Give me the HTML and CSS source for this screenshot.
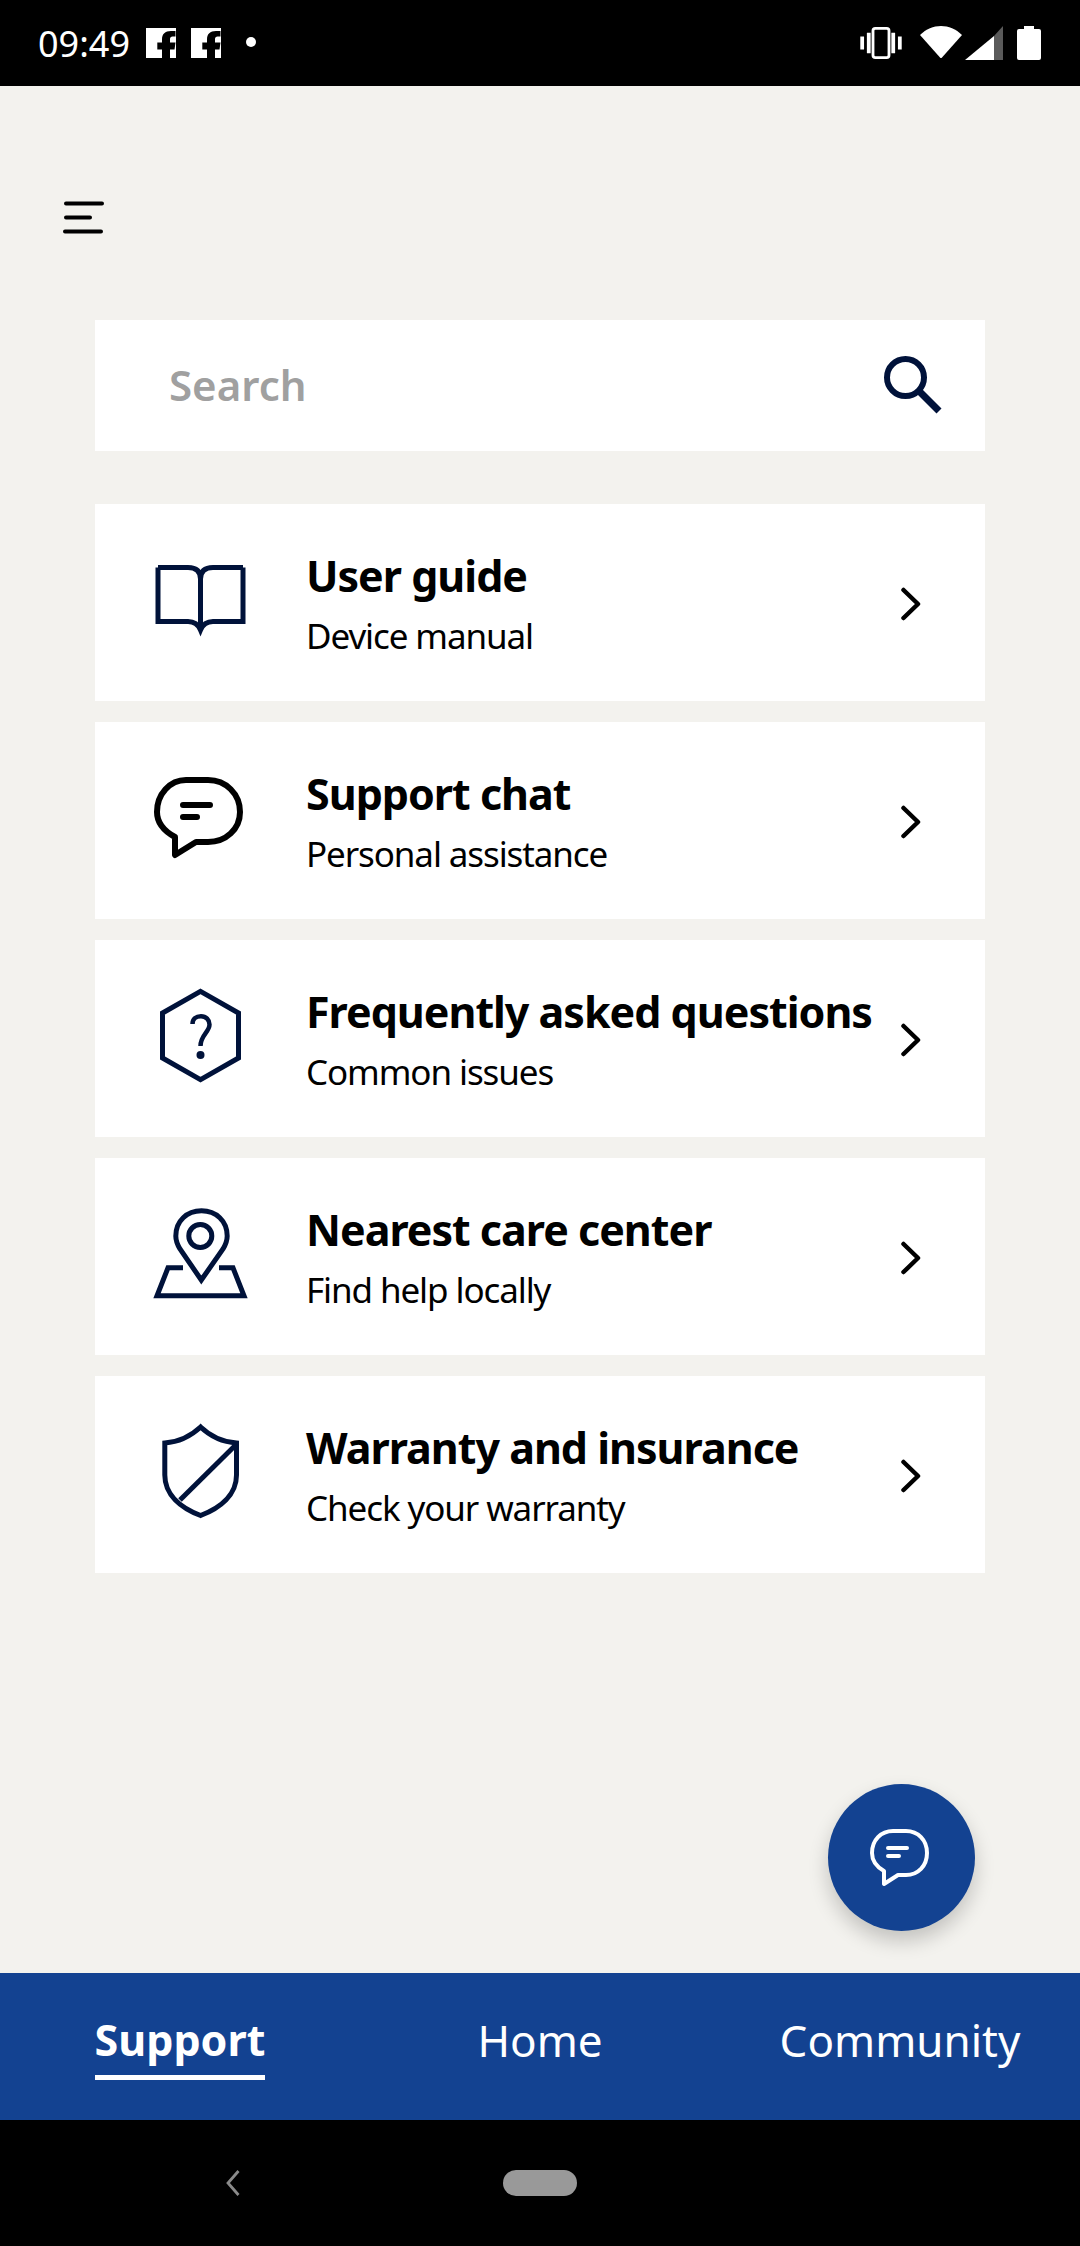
FILE: index.html
```html
<!DOCTYPE html>
<html lang="en">
<head>
    <meta charset="UTF-8">
    <meta name="viewport" content="width=device-width, initial-scale=1.0">
    <title>Support</title>
    <link rel="stylesheet" href="styles.css">
</head>
<body>
    <div class="phone">
        <header class="status-bar">
            <div class="status-left">
                <span class="clock">09:49</span>
                <svg class="fb" viewBox="0 0 30 30"><path fill="#fff" d="M0 0H30V30H24V21.500H28.500L29.500 14.600H24V11C24 9.500 25 8.500 26.500 8.500H29.500V3H25C19 3 16 6 16 11V14.600H11.300V21.500H16V30H0Z"/></svg>
                <svg class="fb" viewBox="0 0 30 30"><path fill="#fff" d="M0 0H30V30H24V21.500H28.500L29.500 14.600H24V11C24 9.500 25 8.500 26.500 8.500H29.500V3H25C19 3 16 6 16 11V14.600H11.300V21.500H16V30H0Z"/></svg>
                <span class="dot"></span>
            </div>
            <div class="status-right">
                <svg class="vibrate" viewBox="0 0 44 34"><path fill="#fff" d="M0 10H4V24H0ZM40 10H44V24H40ZM7 6H11V28H7ZM33 6H37V28H33Z"/><rect x="13.500" y="1.500" width="17" height="31" rx="2.500" fill="none" stroke="#fff" stroke-width="3"/></svg>
                <svg class="wifi" viewBox="0 0 42 32"><path fill="#fff" d="M0 9C12-3 30-3 42 9L22 31.500Q21 32.500 20 31.500Z"/></svg>
                <svg class="signal" viewBox="0 0 38 34"><path fill="#fff" d="M0 34L29 10V34Z"/><path fill="#5a5a5a" d="M29 10L38 0V34H29Z"/></svg>
                <svg class="battery" viewBox="0 0 24 34"><path fill="#fff" d="M7 0H17V3H22Q24 3 24 5V32Q24 34 22 34H2Q0 34 0 32V5Q0 3 2 3H7Z"/></svg>
            </div>
        </header>

        <main class="content">
            <button class="menu-btn">
                <svg viewBox="0 0 42 34" width="42" height="34"><path fill="none" stroke="#000" stroke-width="4" stroke-linecap="round" d="M3 3.500H39M3 17.500H27M2 31.500H38"/></svg>
            </button>

            <div class="search">
                <span class="search-text">Search</span>
                <svg class="search-icon" viewBox="0 0 58 58"><circle cx="21.500" cy="21.500" r="18.500" fill="none" stroke="#00123a" stroke-width="6"/><path fill="none" stroke="#00123a" stroke-width="7" d="M35 35L55 55"/></svg>
            </div>

            <div class="card-list">
                <div class="card">
                    <div class="card-icon">
                        <svg viewBox="0 0 100 116" width="100" height="116"><path fill="none" stroke="#00123a" stroke-width="5" d="M8 22.500H38Q50.500 22.500 50.500 34V82M93 22.500H63Q50.500 22.500 50.500 34M8 22.500V76.500H38Q47 76.500 50.500 85Q54 76.500 63 76.500H93V22.500"/></svg>
                    </div>
                    <div class="card-text">
                        <div class="card-title">User guide</div>
                        <div class="card-sub">Device manual</div>
                    </div>
                    <svg class="chevron" viewBox="0 0 20 34"><path fill="none" stroke="#000" stroke-width="4.500" stroke-linecap="round" stroke-linejoin="round" d="M2.500 3L17 17L2.500 31"/></svg>
                </div>
                <div class="card">
                    <div class="card-icon">
                        <svg viewBox="0 0 100 116" width="100" height="116"><path fill="none" stroke="#000" stroke-width="6" stroke-linejoin="round" d="M36 17H58C76 17 90 31 90 49C90 66 76 79 58 79H46L25 92V74C14 68 7 59 7 49C7 31 20 17 36 17Z"/><path fill="none" stroke="#000" stroke-width="6" stroke-linecap="round" d="M33 42H60M33 54H47"/></svg>
                    </div>
                    <div class="card-text">
                        <div class="card-title">Support chat</div>
                        <div class="card-sub">Personal assistance</div>
                    </div>
                    <svg class="chevron" viewBox="0 0 20 34"><path fill="none" stroke="#000" stroke-width="4.500" stroke-linecap="round" stroke-linejoin="round" d="M2.500 3L17 17L2.500 31"/></svg>
                </div>
                <div class="card">
                    <div class="card-icon">
                        <svg viewBox="0 0 100 116" width="100" height="116"><path fill="none" stroke="#00123a" stroke-width="5" d="M50.500 10.300L88.500 32V77L50.500 98.700L12.500 77V32Z"/><path fill="none" stroke="#00123a" stroke-width="4.500" d="M42.500 43C42.500 38 46 35.300 51 35.300C56 35.300 59.500 39 59.500 43.500C59.500 51 50.500 54 50.500 65"/><circle cx="50.500" cy="74" r="4" fill="#00123a"/></svg>
                    </div>
                    <div class="card-text">
                        <div class="card-title">Frequently asked questions</div>
                        <div class="card-sub">Common issues</div>
                    </div>
                    <svg class="chevron" viewBox="0 0 20 34"><path fill="none" stroke="#000" stroke-width="4.500" stroke-linecap="round" stroke-linejoin="round" d="M2.500 3L17 17L2.500 31"/></svg>
                </div>
                <div class="card">
                    <div class="card-icon">
                        <svg viewBox="0 0 100 116" width="100" height="116"><path fill="none" stroke="#00123a" stroke-width="5" d="M51.300 81L30 50C27 45 25.800 41 25.800 37C25.800 22 37 11.800 51.500 11.800C66 11.800 77.200 22 77.200 37C77.200 41 76 45 73 50Z"/><circle cx="50.300" cy="37" r="11.500" fill="none" stroke="#00123a" stroke-width="5"/><path fill="none" stroke="#00123a" stroke-width="5" d="M33 68.800H18L7 96.800H94L83 68.800H69"/></svg>
                    </div>
                    <div class="card-text">
                        <div class="card-title">Nearest care center</div>
                        <div class="card-sub">Find help locally</div>
                    </div>
                    <svg class="chevron" viewBox="0 0 20 34"><path fill="none" stroke="#000" stroke-width="4.500" stroke-linecap="round" stroke-linejoin="round" d="M2.500 3L17 17L2.500 31"/></svg>
                </div>
                <div class="card">
                    <div class="card-icon">
                        <svg viewBox="0 0 100 116" width="100" height="116"><path fill="none" stroke="#00123a" stroke-width="5" d="M50.600 10C60 19 72 25 86.500 26V58C86.500 78 70 91 50.600 98.500C31 91 14.800 78 14.800 58V26C29 25 41 19 50.600 10Z"/><path fill="none" stroke="#00123a" stroke-width="5" d="M30 83L86.700 27"/></svg>
                    </div>
                    <div class="card-text">
                        <div class="card-title">Warranty and insurance</div>
                        <div class="card-sub">Check your warranty</div>
                    </div>
                    <svg class="chevron" viewBox="0 0 20 34"><path fill="none" stroke="#000" stroke-width="4.500" stroke-linecap="round" stroke-linejoin="round" d="M2.500 3L17 17L2.500 31"/></svg>
                </div>
            </div>

            <button class="fab">
                <svg viewBox="0 0 60 58" width="60" height="58"><path fill="none" stroke="#fff" stroke-width="4" stroke-linejoin="round" d="M23 2H36C48 2 57 11 57 24C57 37 48 46 36 46H28L14 55V42C7 38 2 32 2 24C2 11 11 2 23 2Z"/><path fill="none" stroke="#fff" stroke-width="4" stroke-linecap="round" d="M18 19H37M18 27H29"/></svg>
            </button>
        </main>

        <nav class="tabs">
            <div class="tab-cell"><a class="tab active">Support</a></div>
            <div class="tab-cell"><a class="tab">Home</a></div>
            <div class="tab-cell"><a class="tab">Community</a></div>
        </nav>

        <footer class="nav-bar">
            <svg class="back" viewBox="0 0 14 26"><path fill="none" stroke="#8a8a8a" stroke-width="2.800" d="M12.500 1L2 13L12.500 25"/></svg>
            <span class="home-pill"></span>
        </footer>
    </div>
</body>
</html>
```

FILE: styles.css
```css
* {
    box-sizing: border-box;
}
body {
    margin: 0;
    background: #f3f2ee;
    font-family: "Noto Sans", "Open Sans", sans-serif;
}
.phone {
    width: 1080px;
    height: 2246px;
    display: flex;
    flex-direction: column;
}

/* status bar */
.status-bar {
    height: 86px;
    background: #000;
    color: #fff;
    display: flex;
    justify-content: space-between;
    align-items: center;
    padding: 0 39px 0 38px;
}
.status-left, .status-right {
    display: flex;
    align-items: center;
}
.clock {
    font-size: 36px;
    margin-right: 16px;
}
.fb {
    width: 30px;
    height: 30px;
    margin-right: 15px;
}
.dot {
    width: 10px;
    height: 10px;
    border-radius: 50%;
    background: #fff;
    margin-left: 10px;
    margin-top: -2px;
}
.vibrate {
    width: 42px;
    height: 32px;
    margin-right: 18px;
}
.wifi {
    width: 42px;
    height: 32px;
    margin-right: 3px;
    margin-top: -2px;
}
.signal {
    width: 38px;
    height: 34px;
    margin-right: 14px;
}
.battery {
    width: 24px;
    height: 34px;
}

/* content */
.content {
    flex: 1;
    position: relative;
    padding: 114px 95px 0 95px;
}
.menu-btn {
    display: block;
    background: none;
    border: 0;
    padding: 0;
    margin-left: -32px;
    height: 34px;
}
.search {
    height: 131px;
    margin-top: 86px;
    background: #fff;
    display: flex;
    align-items: center;
    justify-content: space-between;
    padding: 0 43px 2px 74px;
}
.search-text {
    font-size: 42px;
    font-weight: 600;
    color: #a0a0a0;
}
.search-icon {
    width: 58px;
    height: 58px;
}
.card-list {
    margin-top: 53px;
    display: flex;
    flex-direction: column;
    gap: 21px;
}
.card {
    height: 197px;
    background: #fff;
    display: flex;
    align-items: center;
    padding-right: 64px;
}
.card-icon {
    width: 211px;
    padding-left: 55px;
    flex: none;
    display: flex;
}
.card-text {
    flex: 1;
    padding-top: 2px;
    white-space: nowrap;
}
.card-title {
    font-size: 43px;
    font-weight: 700;
    letter-spacing: -1px;
    color: #000;
    line-height: 56px;
}
.card-sub {
    font-size: 35px;
    letter-spacing: -1.1px;
    color: #000;
    line-height: 46px;
    margin-top: 9px;
}
.chevron {
    width: 20px;
    height: 34px;
    flex: none;
    margin-top: 2px;
}
.fab {
    position: absolute;
    left: 828px;
    top: 1698px;
    width: 147px;
    height: 147px;
    border: 0;
    border-radius: 50%;
    background: #134291;
    box-shadow: 0 10px 20px rgba(0, 0, 0, 0.2);
    display: flex;
    align-items: center;
    justify-content: center;
    padding: 0 3px 0 0;
}

/* bottom tabs */
.tabs {
    height: 147px;
    background: #134291;
    display: grid;
    grid-template-columns: repeat(3, 1fr);
    align-items: center;
}
.tab-cell {
    display: flex;
    justify-content: center;
    padding-bottom: 2px;
}
.tab {
    color: #fff;
    font-size: 44px;
    line-height: 56px;
    padding-bottom: 7px;
    border-bottom: 5px solid transparent;
}
.tab.active {
    font-size: 43px;
    font-weight: 700;
    border-bottom-color: #fff;
}

/* android nav */
.nav-bar {
    height: 126px;
    background: #000;
    display: flex;
    align-items: center;
    padding: 0 0 0 226px;
}
.back {
    width: 14px;
    height: 26px;
}
.home-pill {
    width: 74px;
    height: 26px;
    border-radius: 13px;
    background: #999;
    margin-left: 263px;
}
```
